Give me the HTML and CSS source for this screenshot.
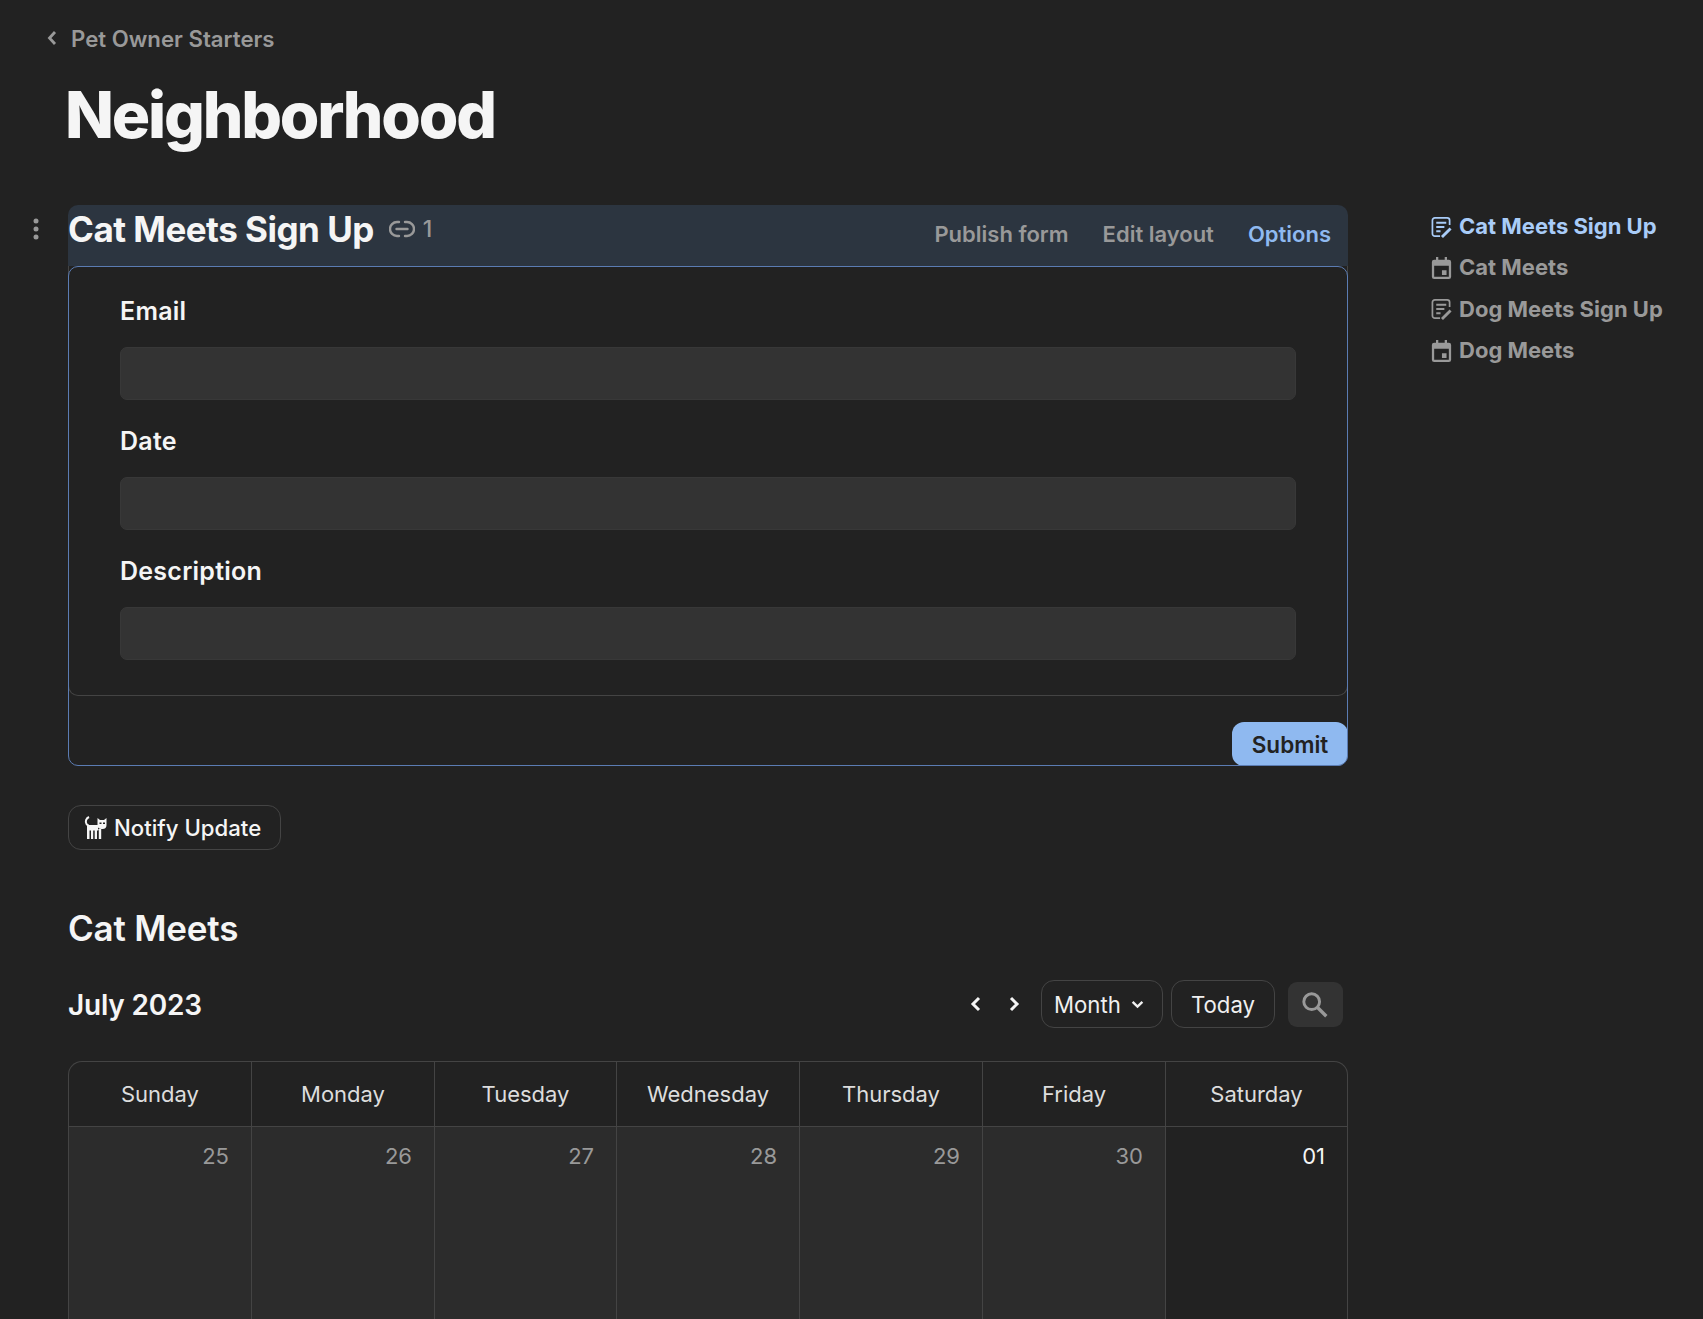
FILE: index.html
```html
<!DOCTYPE html>
<html lang="en">
<head>
<meta charset="utf-8">
<title>Neighborhood</title>
<link rel="stylesheet" href="styles.css">
</head>
<body>
<svg class="defs" width="0" height="0" aria-hidden="true">
  <symbol id="i-form" viewBox="0 0 22 22">
    <path d="M9.500 20.500H4a2.500 2.500 0 0 1-2.500-2.500V4A2.500 2.500 0 0 1 4 1.500h13A2.500 2.500 0 0 1 19.500 4v5" fill="none" stroke="currentColor" stroke-width="1.800"/>
    <path d="M5.500 6.500h10.500M5.500 11h8.500M5.500 15.500h4.500" fill="none" stroke="currentColor" stroke-width="2"/>
    <path d="M11.500 21.500L20.500 12.500" fill="none" stroke="currentColor" stroke-width="3"/>
  </symbol>
  <symbol id="i-cal" viewBox="0 0 22 24">
    <path d="M5 0h2.500v3h7V0H17v3h2a2.500 2.500 0 0 1 2.500 2.500v16A2.500 2.500 0 0 1 19 24H3a2.500 2.500 0 0 1-2.500-2.500v-16A2.500 2.500 0 0 1 3 3h2zM3 9.500v12h16v-12zM11.500 14.500h5v5h-5z" fill="currentColor" fill-rule="evenodd"/>
  </symbol>
</svg>
<div class="page">
  <main class="main">
    <a class="back">
      <svg class="back-icon" viewBox="0 0 10 16"><path d="M8 2L2.500 8 8 14" fill="none" stroke="currentColor" stroke-width="2.800"/></svg>
      <span>Pet Owner Starters</span>
    </a>
    <h1 class="title">Neighborhood</h1>

    <section class="block">
      <svg class="dots" viewBox="0 0 6 22"><circle cx="3" cy="3" r="2.500"/><circle cx="3" cy="11" r="2.500"/><circle cx="3" cy="19" r="2.500"/></svg>
      <header class="block-head">
        <div class="block-title">
          <h2 class="h2 h2-block">Cat Meets Sign Up</h2>
          <svg class="link-icon" viewBox="0 0 26 18"><path d="M10 2H8a7 7 0 0 0 0 14h2M16 2h2a7 7 0 0 1 0 14h-2M7.500 9h11" fill="none" stroke="currentColor" stroke-width="2.400" stroke-linecap="round"/></svg>
          <span class="link-count">1</span>
        </div>
        <nav class="block-actions">
          <span>Publish form</span>
          <span>Edit layout</span>
          <span class="accent">Options</span>
        </nav>
      </header>
      <form class="form">
        <div class="fields">
          <div class="field"><label class="label">Email</label><div class="input"></div></div>
          <div class="field"><label class="label">Date</label><div class="input"></div></div>
          <div class="field"><label class="label">Description</label><div class="input"></div></div>
        </div>
        <div class="form-foot"><button class="submit" type="button">Submit</button></div>
      </form>
    </section>

    <button class="notify" type="button">
      <svg class="cat" viewBox="0 0 24 24">
        <path d="M5 1C2 2.500 1 5.500 2.500 8c.6 1 1.500 1.500 2.500 1.500" fill="none" stroke="currentColor" stroke-width="2"/>
        <path d="M3 9h11v5.500h-1V23h-2.300v-8.500H9.200V23H7v-8.500H5.500V23H3z" fill="currentColor"/>
        <path d="M14.200 13h3v10h-2.400v-8z" fill="currentColor"/>
        <path d="M13.500 2l2.500 2h4l2.500-2v7a4 4 0 0 1-4 4h-1a4 4 0 0 1-4-4z" fill="currentColor"/>
        <path d="M15.500 6.500h2v1.500h-2zM19 6.500h2v1.500h-2z" fill="#222222"/>
      </svg>
      <span>Notify Update</span>
    </button>

    <h2 class="h2 cal-title">Cat Meets</h2>

    <div class="cal-bar">
      <div class="month">July 2023</div>
      <div class="cal-tools">
        <svg class="nav-icon" viewBox="0 0 12 16"><path d="M9 2L3 8l6 6" fill="none" stroke="currentColor" stroke-width="3"/></svg>
        <svg class="nav-icon nav-next" viewBox="0 0 12 16"><path d="M3 2l6 6-6 6" fill="none" stroke="currentColor" stroke-width="3"/></svg>
        <div class="tool tool-month">Month
          <svg class="caret" viewBox="0 0 12 8"><path d="M1.500 1.500L6 6l4.500-4.500" fill="none" stroke="currentColor" stroke-width="2.200"/></svg>
        </div>
        <div class="tool tool-today">Today</div>
        <div class="search">
          <svg class="search-icon" viewBox="0 0 24 24"><circle cx="9.500" cy="9.500" r="7" fill="none" stroke="currentColor" stroke-width="2.600"/><path d="M14.500 14.500l8 8" fill="none" stroke="currentColor" stroke-width="3"/></svg>
        </div>
      </div>
    </div>

    <div class="calendar">
      <div class="dow">Sunday</div>
      <div class="dow">Monday</div>
      <div class="dow">Tuesday</div>
      <div class="dow">Wednesday</div>
      <div class="dow">Thursday</div>
      <div class="dow">Friday</div>
      <div class="dow">Saturday</div>
      <div class="day off">25</div>
      <div class="day off">26</div>
      <div class="day off">27</div>
      <div class="day off">28</div>
      <div class="day off">29</div>
      <div class="day off">30</div>
      <div class="day">01</div>
    </div>
  </main>

  <aside class="toc">
    <a class="toc-item active"><svg class="toc-icon"><use href="#i-form"/></svg><span>Cat Meets Sign Up</span></a>
    <a class="toc-item"><svg class="toc-icon"><use href="#i-cal"/></svg><span>Cat Meets</span></a>
    <a class="toc-item"><svg class="toc-icon"><use href="#i-form"/></svg><span>Dog Meets Sign Up</span></a>
    <a class="toc-item"><svg class="toc-icon"><use href="#i-cal"/></svg><span>Dog Meets</span></a>
  </aside>
</div>
</body>
</html>
```

FILE: styles.css
```css
* { box-sizing: border-box; }
html, body { margin: 0; height: 1319px; overflow: hidden; background: #222222; }
body { font-family: Inter, "Liberation Sans", sans-serif; color: #f5f5f5; }
.defs { position: absolute; }
.page { display: flex; align-items: flex-start; padding-left: 68px; height: 1319px; overflow: hidden; }
.main { width: 1280px; flex: none; }

.back { display: flex; align-items: center; gap: 14px; height: 30px; margin: 23px 0 0 -21px; color: #999999; font-size: 22.200px; font-weight: 600; }
.back-icon { width: 10px; height: 16px; }

.title { margin: 21px 0 0 -3px; font-size: 64px; line-height: 82px; font-weight: 800; letter-spacing: -2.200px; color: #f5f5f5; }

.block { position: relative; margin-top: 49px; }
.dots { position: absolute; left: -35px; top: 13px; width: 6px; height: 22px; fill: #999999; }
.block-head { display: flex; align-items: flex-start; justify-content: space-between; height: 61px; background: #2c3540; border-radius: 10px 10px 0 0; }
.block-title { display: flex; align-items: center; height: 48px; }
.h2 { margin: 0; font-size: 35px; line-height: 48px; font-weight: 600; letter-spacing: -.2px; color: #f5f5f5; }
.h2-block { font-weight: 700; letter-spacing: -.5px; }
.link-icon { width: 26px; height: 18px; margin-left: 15px; color: #999999; }
.link-count { margin-left: 8px; font-size: 23px; font-weight: 500; color: #999999; }
.block-actions { display: flex; gap: 34px; padding: 14px 17px 0 0; font-size: 22px; line-height: 30px; font-weight: 600; color: #999999; }
.accent { color: #8fb9f0; }

.form { position: relative; height: 500px; }
.form::after { content: ""; position: absolute; inset: 0; border: 1px solid #5b7cb3; border-radius: 10px; pointer-events: none; }
.fields { height: 430px; padding: 29px 51px 0; border: 1px solid #444444; border-top: 0; border-radius: 0 0 10px 10px; }
.field { display: flex; flex-direction: column; }
.label { height: 33px; font-size: 25px; line-height: 33px; font-weight: 600; letter-spacing: .25px; color: #f5f5f5; }
.input { height: 53px; margin: 19px 0 25px; background: #333333; border: 1px solid #383838; border-radius: 7px; }
.form-foot { display: flex; justify-content: flex-end; padding-top: 26px; }
.submit { width: 116px; height: 44px; margin: 0; border: 0; border-radius: 12px; background: #8fb9f0; color: #222222; font: 600 22.500px/44px Inter, sans-serif; }

.notify { display: flex; align-items: center; gap: 6px; width: 213px; height: 45px; margin-top: 39px; padding: 0 0 0 15px; background: #222222; border: 1px solid #444444; border-radius: 13px; color: #f5f5f5; font: 500 22.200px/30px Inter, sans-serif; }
.cat { width: 24px; height: 24px; flex: none; }

.cal-title { margin-top: 54px; }

.cal-bar { display: flex; align-items: center; justify-content: space-between; height: 48px; margin-top: 28px; }
.month { padding-top: 1px; font-size: 28px; font-weight: 600; letter-spacing: -.2px; color: #f5f5f5; }
.cal-tools { display: flex; align-items: center; padding-right: 5px; font-size: 22.200px; }
.nav-icon { width: 12px; height: 16px; color: #f5f5f5; }
.nav-next { margin-left: 26px; }
.tool { display: flex; align-items: center; justify-content: center; height: 48px; border: 1px solid #444444; border-radius: 13px; color: #f0f0f0; }
.tool-month { justify-content: flex-start; width: 122px; margin-left: 21px; padding-left: 12px; gap: 10px; }
.tool-today { width: 104px; margin-left: 8px; }
.caret { width: 13px; height: 9px; }
.search { display: flex; align-items: center; justify-content: center; width: 55px; height: 45px; margin-left: 13px; background: #333333; border-radius: 9px; color: #999999; }
.search-icon { width: 27px; height: 27px; margin-left: -2px; }

.calendar { display: grid; grid-template-columns: 182px 183px 182px repeat(3, 183px) 1fr; grid-auto-rows: 65px 300px; margin-top: 33px; border: 1px solid #444444; border-bottom: 0; border-radius: 14px 14px 0 0; overflow: hidden; }
.dow { display: flex; align-items: center; justify-content: center; border-left: 1px solid #444444; border-bottom: 1px solid #444444; font-size: 22px; color: #dddddd; }
.day { padding: 14px 22px 0 0; border-left: 1px solid #444444; text-align: right; font-size: 22px; line-height: 30px; color: #f5f5f5; }
.dow:nth-child(7n+1), .day:nth-child(7n+1) { border-left: 0; }
.off { background: #2c2c2c; color: #999999; }

.toc { display: flex; flex-direction: column; gap: 10.400px; margin: 211px 0 0 83px; font-size: 22px; line-height: 31px; font-weight: 700; color: #999999; }
.toc-item { display: flex; align-items: center; gap: 7px; white-space: nowrap; }
.toc-icon { width: 21px; height: 22px; flex: none; }
.toc-item.active { color: #a9ccf8; }
```
